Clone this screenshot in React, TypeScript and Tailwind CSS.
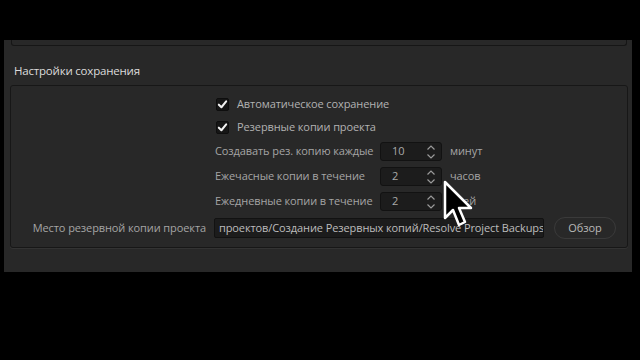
import React from 'react';

function Check() {
  return (
    <div className="w-[13px] h-[13px] rounded-[2px] bg-[#161616] border border-[#0e0e0e] flex items-center justify-center">
      <svg width="11" height="11" viewBox="0 0 12 12">
        <path d="M2 6.2 L4.8 9 L10 2.6" fill="none" stroke="#f2f2f2" strokeWidth="2.2" strokeLinecap="round" strokeLinejoin="round" />
      </svg>
    </div>
  );
}

function Spin({ value }: { value: string }) {
  return (
    <div className="w-[62px] h-[19px] rounded-[3px] bg-[#1c1c1c] border border-[#121212] flex items-center justify-between pl-[11px] pr-[5px]">
      <span className="text-[#a9a9a9]">{value}</span>
      <svg width="10" height="16" viewBox="0 0 10 16">
        <path d="M1.5 5.5 L5 2 L8.5 5.5 M1.5 10.5 L5 14 L8.5 10.5" fill="none" stroke="#9a9a9a" strokeWidth="1.2" />
      </svg>
    </div>
  );
}

const rows = [
  { label: 'Создавать рез. копию каждые', value: '10', unit: 'минут' },
  { label: 'Ежечасные копии в течение', value: '2', unit: 'часов' },
  { label: 'Ежедневные копии в течение', value: '2', unit: 'дней' },
];

export default function App() {
  return (
    <div className="w-[640px] h-[360px] bg-black relative overflow-hidden text-[11px] tracking-[-0.1px]" style={{ fontFamily: '"Open Sans", "Noto Sans", sans-serif' }}>
      <div className="absolute left-[4px] top-[40px] w-[628px] h-[232px] bg-[#282828] pl-[6px] pr-[4px]">
        {/* tail of the previous group */}
        <div className="h-[6px] border-x border-b border-[#161616] rounded-b-[3px] mx-[1px]"></div>

        <div className="pt-[17px] pl-[4px] text-[11.5px] tracking-[-0.2px] text-[#dcdcdc] leading-[16px]">Настройки сохранения</div>

        <div className="mt-[6px] h-[163px] border border-[#171717] rounded-[3px] shadow-[0_1px_0_#333] flex flex-col">
          <div className="pl-[205px] pt-[12px] flex flex-col gap-[10px] text-[#b2b2b2]">
            <div className="flex items-center gap-[8px] h-[13px]">
              <Check />
              <span>Автоматическое сохранение</span>
            </div>
            <div className="flex items-center gap-[8px] h-[13px]">
              <Check />
              <span>Резервные копии проекта</span>
            </div>
          </div>

          <div className="mt-[8px] pl-[204px] flex flex-col gap-[6px]">
            {rows.map((r) => (
              <div key={r.label} className="flex items-center h-[19px]">
                <span className="w-[165px] text-[#a5a5a5]">{r.label}</span>
                <Spin value={r.value} />
                <span className="pl-[8px] text-[#a5a5a5]">{r.unit}</span>
              </div>
            ))}
          </div>

          <div className="mt-[6px] flex items-center h-[22px]">
            <span className="w-[203px] text-right pr-[8px] text-[#a5a5a5]">Место резервной копии проекта</span>
            <div className="w-[330px] h-[20px] bg-[#1c1c1c] border border-[#121212] rounded-[2px] flex items-center pl-[4px] text-[#bdbdbd] overflow-hidden whitespace-nowrap">
              проектов/Создание Резервных копий/Resolve Project Backups
            </div>
            <div className="ml-[10px] w-[62px] h-[22px] rounded-full border border-[#3a3a3a] flex items-center justify-center text-[#b8b8b8]">Обзор</div>
          </div>
        </div>
      </div>

      {/* mouse pointer */}
      <svg className="absolute left-[443px] top-[180px]" width="32" height="50" viewBox="0 0 32 50">
        <path d="M2 2 L2 38 L10 30 L16 45 L22 42 L16 28 L28 28 Z" fill="#000" stroke="#fff" strokeWidth="2.5" strokeLinejoin="round" />
      </svg>
    </div>
  );
}
